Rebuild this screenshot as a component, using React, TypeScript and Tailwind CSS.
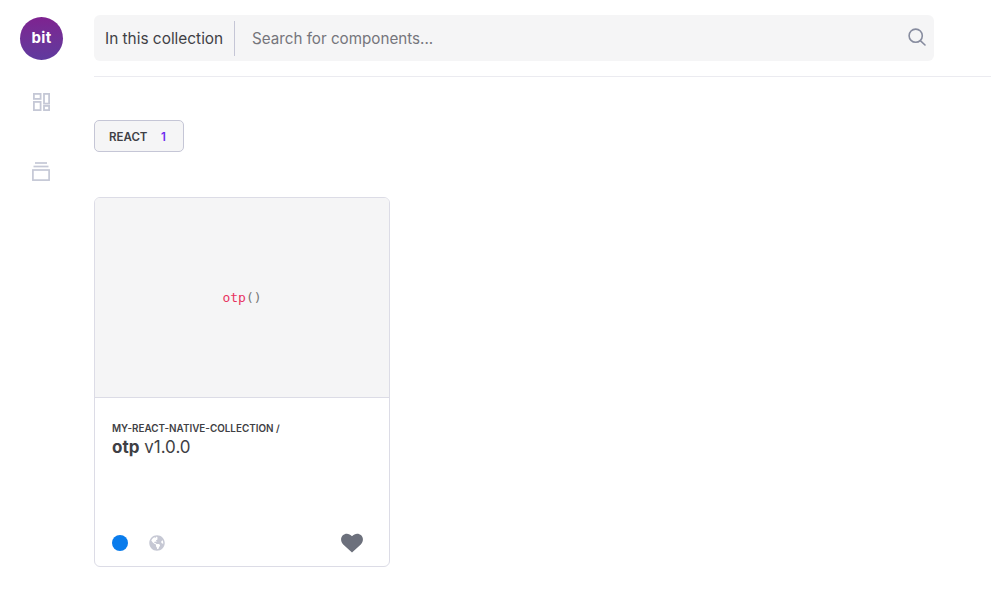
import React from "react";
import { FaGlobeAmericas } from "react-icons/fa";

function DashboardIcon() {
  return (
    <svg width="17" height="18" viewBox="0 0 17 18" fill="none" stroke="#c5c8d6" strokeWidth="1.8">
      <rect x="0.900" y="0.900" width="6.700" height="5" />
      <rect x="11" y="0.900" width="5.100" height="9.700" />
      <rect x="0.900" y="8.900" width="6.700" height="8.200" />
      <rect x="11" y="12.900" width="5.100" height="4.200" />
    </svg>
  );
}

function CollectionIcon() {
  return (
    <svg width="18" height="19" viewBox="0 0 18 19" fill="none" stroke="#c5c8d6" strokeWidth="1.7">
      <path d="M3 1h12" />
      <path d="M1.500 4.500h15" />
      <rect x="0.900" y="8" width="16.200" height="10.100" />
    </svg>
  );
}

function SearchIcon() {
  return (
    <svg width="18" height="18" viewBox="0 0 18 18" fill="none" stroke="#878c9f" strokeWidth="1.6" strokeLinecap="round">
      <circle cx="7.700" cy="7.700" r="6.600" />
      <path d="M12.600 12.800 17 17" />
    </svg>
  );
}

function HeartIcon() {
  return (
    <svg width="22" height="20" viewBox="0 0 22 20" fill="#6c707c">
      <path d="M11 19.600 2.200 11.400C-.6 8.700-.5 4.600 1.800 2.300 4.200-.1 8.300 0 11 3.200 13.700 0 17.800-.1 20.200 2.300c2.300 2.300 2.400 6.400-.4 9.100z" />
    </svg>
  );
}

export default function App() {
  return (
    <div className="flex h-[597px] w-[991px] overflow-hidden bg-white font-['Inter','Noto_Sans',sans-serif] text-[#3f3f45]">
      <aside className="flex w-[94px] shrink-0 flex-col items-center pt-[17px] pr-[11px]">
        <div className="flex h-[43px] w-[43px] items-center justify-center rounded-full bg-gradient-to-b from-[#7e2290] to-[#5f3a9e] text-[15px] font-bold tracking-[0.3px] text-white">
          bit
        </div>
        <div className="mt-[33px] flex h-[18px] items-center">
          <DashboardIcon />
        </div>
        <div className="mt-[51px] flex h-[19px] items-center pr-px">
          <CollectionIcon />
        </div>
      </aside>

      <main className="flex-1">
        <div className="border-b border-[#ebebf0] pt-[15px] pb-[15px]">
          <div className="flex h-[46px] w-[840px] items-center rounded-[6px] bg-[#f5f5f6] pr-[8px] pl-[11px]">
            <span className="w-[129px] pt-px text-[15.4px] whitespace-nowrap text-[#3f3f45]">In this collection</span>
            <div className="h-[35px] w-px bg-[#c5c6d6]" />
            <span className="ml-[17px] flex-1 pt-[2px] text-[15.2px] whitespace-nowrap text-[#75757c]">Search for components...</span>
            <div className="flex pb-[3px]">
              <SearchIcon />
            </div>
          </div>
        </div>

        <div className="mt-[43px] flex h-[32px] w-[90px] items-center rounded-[5px] border border-[#c5c6d6] bg-[#f5f5f6] pt-[4px] pl-[14px] text-[11.5px] font-semibold">
          <span className="w-[52px]">REACT</span>
          <span className="text-[#6c2bf0]">1</span>
        </div>

        <div className="mt-[45px] h-[370px] w-[296px] overflow-hidden rounded-[6px] border border-[#dcdce6]">
          <div className="flex h-[200px] items-center justify-center border-b border-[#dcdce6] bg-[#f5f5f6] font-['DejaVu_Sans_Mono',monospace] text-[13px]">
            <span className="text-[#e8335f]">otp</span>
            <span className="text-[#777]">()</span>
          </div>
          <div className="flex h-[168px] flex-col px-[17px] pt-[24px] pb-[13px]">
            <div className="text-[9.9px] leading-[13px] font-semibold whitespace-nowrap">MY-REACT-NATIVE-COLLECTION /</div>
            <div className="text-[17px] leading-[24px]">
              <span className="font-bold">otp</span> v1.0.0
            </div>
            <div className="mt-auto flex items-center">
              <div className="h-[16px] w-[16px] rounded-full bg-[#0a7cec]" />
              <FaGlobeAmericas className="ml-[21px] text-[16px] text-[#c6c8d4]" />
              <div className="ml-auto mr-[9px] flex">
                <HeartIcon />
              </div>
            </div>
          </div>
        </div>
      </main>
    </div>
  );
}
